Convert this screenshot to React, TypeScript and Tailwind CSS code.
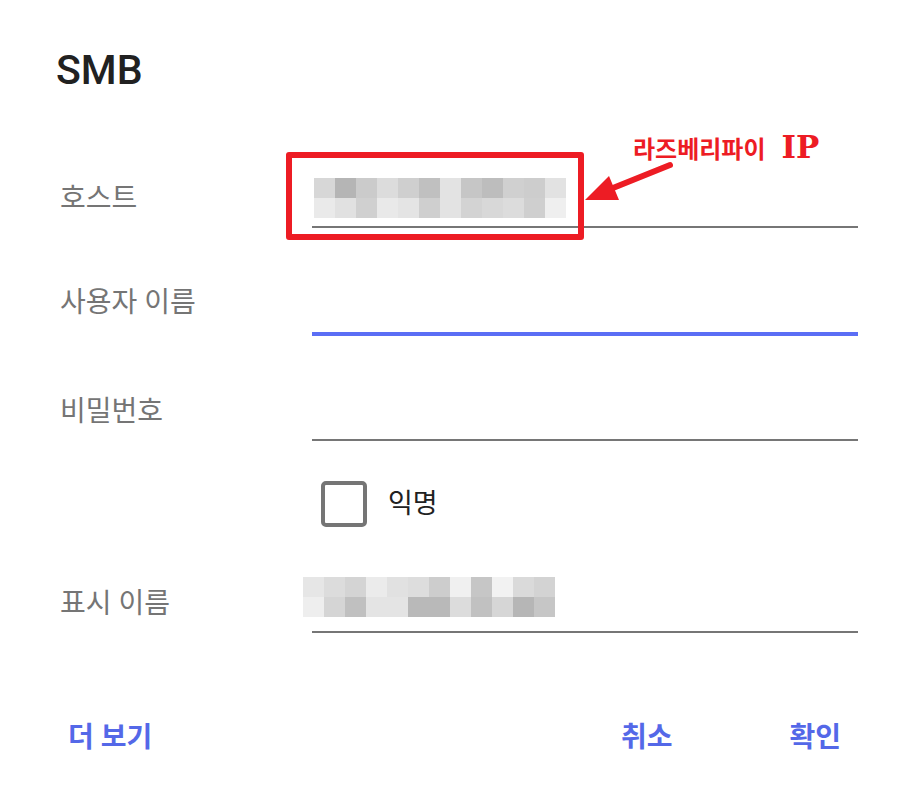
const hostCells = [
  ['#d7d7d7', '#b5b5b5', '#cbcbcb', '#dcdcdc', '#cfcfcf', '#c0c0c0', '#e3e3e3', '#c6c6c6', '#bdbdbd', '#d0d0d0', '#cdcdcd', '#e2e2e2'],
  ['#eaeaea', '#e1e1e1', '#d0d0d0', '#e9e9e9', '#e4e4e4', '#cfcfcf', '#e3e3e3', '#d3d3d3', '#d8d8d8', '#dcdcdc', '#cfcfcf', '#efefef'],
];

const nameCells = [
  ['#e6e6e6', '#dcdcdc', '#d4d4d4', '#ebebeb', '#e1e1e1', '#dddddd', '#cdcdcd', '#f0f0f0', '#c6c6c6', '#f2f2f2', '#dadada', '#d3d3d3'],
  ['#eeeeee', '#d5d5d5', '#c0c0c0', '#e4e4e4', '#e4e4e4', '#b9b9b9', '#b9b9b9', '#dcdcdc', '#c1c1c1', '#d6d6d6', '#b6b6b6', '#c6c6c6'],
];

// blurred value, drawn as mosaic cells
function Mosaic({ rows }: { rows: string[][] }) {
  return (
    <div className="flex flex-col">
      {rows.map((row, i) => (
        <div key={i} className="flex">
          {row.map((c, j) => (
            <div key={j} className="h-[20px] w-[21px]" style={{ backgroundColor: c }} />
          ))}
        </div>
      ))}
    </div>
  );
}

function Field({ label, active, children }: { label: string; active?: boolean; children?: React.ReactNode }) {
  return (
    <div className="flex">
      <div className="flex h-[56px] w-[256px] items-center pl-[4px] pt-[2px] text-[28px] text-[#757575]">{label}</div>
      <div
        className={
          active
            ? 'mt-[2px] h-[60px] flex-1 border-b-4 border-[#5b6ef5]'
            : 'h-[58px] flex-1 border-b-2 border-[#767676]'
        }
      >
        {children}
      </div>
    </div>
  );
}

export default function App() {
  return (
    <div
      className="relative h-[809px] w-[921px] overflow-hidden bg-white pl-[56px] pr-[63px]"
      style={{ fontFamily: 'Roboto, "Noto Sans CJK KR", sans-serif' }}
    >
      <h1 className="pt-[46px] text-[41px] leading-[48px] font-medium text-[#212121]">SMB</h1>

      <div className="mt-[76px]">
        <Field label="호스트">
          <div className="ml-[2px] pt-[8px]">
            <Mosaic rows={hostCells} />
          </div>
        </Field>
      </div>
      <div className="mt-[46px]">
        <Field label="사용자 이름" active />
      </div>
      <div className="mt-[47px]">
        <Field label="비밀번호" />
      </div>

      <div className="mt-[40px] flex items-center pl-[265px]">
        <div className="h-[46px] w-[46px] rounded-[5px] border-4 border-[#757575]" />
        <span className="ml-[21px] text-[27px] text-[#212121]">익명</span>
      </div>

      <div className="mt-[48px]">
        <Field label="표시 이름">
          <div className="-ml-[9px] pt-[2px]">
            <Mosaic rows={nameCells} />
          </div>
        </Field>
      </div>

      <div className="mt-[84px] flex items-center pr-[17px] text-[28px] font-bold text-[#5468e8]">
        <span className="pl-[12px]">더 보기</span>
        <span className="ml-auto">취소</span>
        <span className="ml-[117px]">확인</span>
      </div>

      {/* annotation overlay */}
      <div className="absolute left-[286px] top-[152px] h-[88px] w-[298px] rounded-[3px] border-[6px] border-[#ed1c24]" />
      <div className="absolute left-[633px] top-[124px] flex items-baseline text-[24px] font-bold text-[#ed1c24]">
        <span>라즈베리파이</span>
        <span className="ml-[16px] text-[31px]" style={{ fontFamily: '"DejaVu Serif", serif' }}>IP</span>
      </div>
      <svg className="absolute left-0 top-0" width="921" height="809">
        <line x1="670" y1="165" x2="608" y2="190" stroke="#ed1c24" strokeWidth="6" strokeLinecap="round" />
        <polygon points="585,200 609,176 619,200" fill="#ed1c24" />
      </svg>
    </div>
  );
}
